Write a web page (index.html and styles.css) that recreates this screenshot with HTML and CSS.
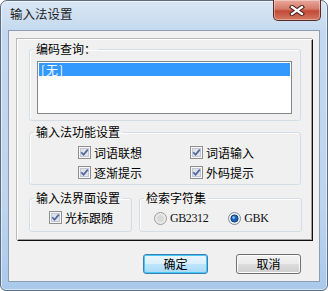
FILE: index.html
```html
<!DOCTYPE html>
<html lang="zh-CN">
<head>
<meta charset="UTF-8">
<title>输入法设置</title>
<link rel="stylesheet" href="styles.css">
</head>
<body>
    <!-- Dialog window -->
    <div class="window">
        <div class="titlebar">
            <span class="title">输入法设置</span>
            <button class="close-btn" title="关闭">
                <svg width="16" height="11" viewBox="0 0 16 11">
                    <path d="M3 2 L13 9 M13 2 L3 9" stroke="#4a2019" stroke-width="4.2" stroke-linecap="square"/>
                    <path d="M3 2 L13 9 M13 2 L3 9" stroke="#ffffff" stroke-width="2.2" stroke-linecap="square"/>
                </svg>
            </button>
        </div>

        <div class="client">
            <div class="panel">
                <!-- Code lookup -->
                <fieldset class="group group-query">
                    <legend>编码查询：</legend>
                    <div class="listbox">
                        <div class="list-item selected">[无]</div>
                    </div>
                </fieldset>

                <!-- Features -->
                <fieldset class="group group-func">
                    <legend>输入法功能设置</legend>
                    <div class="check-grid">
                        <label class="check">
                            <svg class="box" width="13" height="13" viewBox="0 0 13 13">
                                <rect x="0.5" y="0.5" width="12" height="12" fill="#f6f6f6" stroke="#8e8f8f"/>
                                <rect x="2.5" y="2.5" width="8" height="8" fill="#dfe3e8" stroke="#c3c8cf"/>
                                <path d="M3.3 6.3 L5.5 8.7 L9.8 3.6" fill="none" stroke="#4c64a3" stroke-width="1.7"/>
                            </svg>
                            词语联想
                        </label>
                        <label class="check">
                            <svg class="box" width="13" height="13" viewBox="0 0 13 13">
                                <rect x="0.5" y="0.5" width="12" height="12" fill="#f6f6f6" stroke="#8e8f8f"/>
                                <rect x="2.5" y="2.5" width="8" height="8" fill="#dfe3e8" stroke="#c3c8cf"/>
                                <path d="M3.3 6.3 L5.5 8.7 L9.8 3.6" fill="none" stroke="#4c64a3" stroke-width="1.7"/>
                            </svg>
                            词语输入
                        </label>
                        <label class="check">
                            <svg class="box" width="13" height="13" viewBox="0 0 13 13">
                                <rect x="0.5" y="0.5" width="12" height="12" fill="#f6f6f6" stroke="#8e8f8f"/>
                                <rect x="2.5" y="2.5" width="8" height="8" fill="#dfe3e8" stroke="#c3c8cf"/>
                                <path d="M3.3 6.3 L5.5 8.7 L9.8 3.6" fill="none" stroke="#4c64a3" stroke-width="1.7"/>
                            </svg>
                            逐渐提示
                        </label>
                        <label class="check">
                            <svg class="box" width="13" height="13" viewBox="0 0 13 13">
                                <rect x="0.5" y="0.5" width="12" height="12" fill="#f6f6f6" stroke="#8e8f8f"/>
                                <rect x="2.5" y="2.5" width="8" height="8" fill="#dfe3e8" stroke="#c3c8cf"/>
                                <path d="M3.3 6.3 L5.5 8.7 L9.8 3.6" fill="none" stroke="#4c64a3" stroke-width="1.7"/>
                            </svg>
                            外码提示
                        </label>
                    </div>
                </fieldset>

                <div class="group-row">
                    <!-- UI settings -->
                    <fieldset class="group group-ui">
                        <legend>输入法界面设置</legend>
                        <label class="check">
                            <svg class="box" width="13" height="13" viewBox="0 0 13 13">
                                <rect x="0.5" y="0.5" width="12" height="12" fill="#f6f6f6" stroke="#8e8f8f"/>
                                <rect x="2.5" y="2.5" width="8" height="8" fill="#dfe3e8" stroke="#c3c8cf"/>
                                <path d="M3.3 6.3 L5.5 8.7 L9.8 3.6" fill="none" stroke="#4c64a3" stroke-width="1.7"/>
                            </svg>
                            光标跟随
                        </label>
                    </fieldset>

                    <!-- Charset -->
                    <fieldset class="group group-charset">
                        <legend>检索字符集</legend>
                        <div class="radio-row">
                            <label class="radio">
                                <svg class="dot" width="13" height="13" viewBox="0 0 13 13">
                                    <circle cx="6.5" cy="6.5" r="6" fill="#ececec" stroke="#9a9a9a"/>
                                    <circle cx="6.5" cy="6.5" r="4" fill="#d8d8d8" stroke="#e9e9e9"/>
                                </svg>
                                <span class="latin">GB2312</span>
                            </label>
                            <label class="radio">
                                <svg class="dot" width="13" height="13" viewBox="0 0 13 13">
                                    <circle cx="6.5" cy="6.5" r="6" fill="#eef3f8" stroke="#7f8a96"/>
                                    <circle cx="6.5" cy="6.5" r="3.6" fill="#1d63b8" stroke="#0d3d78"/>
                                    <circle cx="5.6" cy="5.6" r="1.3" fill="#8fc3f2"/>
                                </svg>
                                <span class="latin">GBK</span>
                            </label>
                        </div>
                    </fieldset>
                </div>
            </div>

            <div class="buttons">
                <button class="btn btn-default">确定</button>
                <button class="btn">取消</button>
            </div>
        </div>
    </div>
</body>
</html>
```

FILE: styles.css
```css
body, html {
    margin: 0;
    padding: 0;
    background-color: #ffffff;
    font-family: "Noto Sans CJK SC", "Liberation Sans", sans-serif;
    font-size: 12px;
    color: #000;
}

/* Window frame */
.window {
    width: 328px;
    height: 291px;
    box-sizing: border-box;
    border: 1px solid #5d6d82;
    border-radius: 7px 7px 6px 6px;
    background: linear-gradient(#dae7f5, #c4d9ef 30px, #bed5ee 200px, #a9c9ec);
    box-shadow: inset 0 0 0 1px rgba(255, 255, 255, 0.55);
    display: flex;
    flex-direction: column;
}

.titlebar {
    height: 29px;
    display: flex;
    align-items: flex-start;
}

.title {
    padding: 6px 0 0 9px;
    line-height: 14px;
    font-size: 12.5px;
    color: #1e1e1e;
}

.close-btn {
    margin: -1px 6px 0 auto;
    width: 48px;
    height: 21px;
    padding: 0;
    border: 1px solid #5b2a22;
    border-top: none;
    border-radius: 0 0 5px 5px;
    background: linear-gradient(#e9a99c, #d47a68 45%, #c24a35 55%, #d27862);
    box-shadow: inset 0 0 0 1px rgba(255, 255, 255, 0.35);
    display: flex;
    align-items: center;
    justify-content: center;
}

/* Client area */
.client {
    flex: 1;
    margin: 0 7px 8px 7px;
    border: 1px solid #8d9db2;
    background-color: #f0f0f0;
    display: flex;
    flex-direction: column;
}

.panel {
    margin: 8px 0 0 8px;
    width: 296px;
    height: 202px;
    box-sizing: border-box;
    border-top: 1px solid #ffffff;
    border-left: 1px solid #ffffff;
    border-right: 1px solid #101010;
    border-bottom: 1px solid #101010;
    box-shadow: inset -1px -1px 0 #a0a0a0, -1px -1px 0 #b9b9b9;
    padding: 3px 0 0 11px;
}

/* Group boxes */
.group {
    margin: 0;
    padding: 0;
    box-sizing: border-box;
    border: 1px solid #d5dce3;
    border-radius: 3px;
    box-shadow: inset 1px 1px 0 #ffffff;
    min-width: 0;
}

.group legend {
    margin-left: 4px;
    padding: 0 2px;
    line-height: 12px;
    font-size: 12px;
}

.group-query {
    width: 272px;
    height: 78px;
}

.listbox {
    margin: 6px 0 0 7px;
    width: 255px;
    height: 53px;
    box-sizing: border-box;
    border: 1px solid #828790;
    background-color: #ffffff;
    padding: 1px;
}

.list-item {
    height: 13px;
    line-height: 13px;
    padding-left: 2px;
    font-size: 12px;
    letter-spacing: 1px;
}

.list-item.selected {
    background-color: #3399ff;
    color: #ffffff;
}

.group-func {
    margin-top: 5px;
    width: 272px;
    height: 59px;
}

.check-grid {
    display: grid;
    grid-template-columns: 112px 1fr;
    row-gap: 7px;
    margin: 8px 0 0 48px;
}

.check {
    display: flex;
    align-items: center;
    gap: 3px;
    height: 13px;
    line-height: 13px;
    white-space: nowrap;
}

.box, .dot {
    flex: none;
}

.group-row {
    display: flex;
    gap: 7px;
    margin-top: 7px;
}

.group-ui {
    width: 103px;
    height: 40px;
}

.group-ui .check {
    margin: 7px 0 0 19px;
}

.group-charset {
    width: 163px;
    height: 40px;
}

.radio-row {
    display: flex;
    gap: 20px;
    margin: 8px 0 0 14px;
}

.radio {
    display: flex;
    align-items: center;
    gap: 3px;
    height: 13px;
}

.latin {
    font-family: "Liberation Serif", serif;
    font-size: 12px;
    letter-spacing: -0.4px;
    color: #111;
}

/* Buttons */
.buttons {
    display: flex;
    justify-content: flex-end;
    gap: 28px;
    margin-top: 13px;
    padding-right: 18px;
}

.btn {
    width: 65px;
    height: 20px;
    padding: 0;
    font-family: inherit;
    font-size: 12px;
    line-height: 16px;
    color: #000;
    border: 1px solid #707070;
    border-radius: 3px;
    background: linear-gradient(#f2f2f2, #ebebeb 50%, #dddddd 50%, #cfcfcf);
    box-shadow: inset 0 0 0 1px #fcfcfc;
}

.btn-default {
    border-color: #3c7fb1;
    background: linear-gradient(#eaf6fd, #d9f0fc 50%, #bee6fd 50%, #a7d9f5);
    box-shadow: inset 0 0 0 1px #48c6f8;
}
```
